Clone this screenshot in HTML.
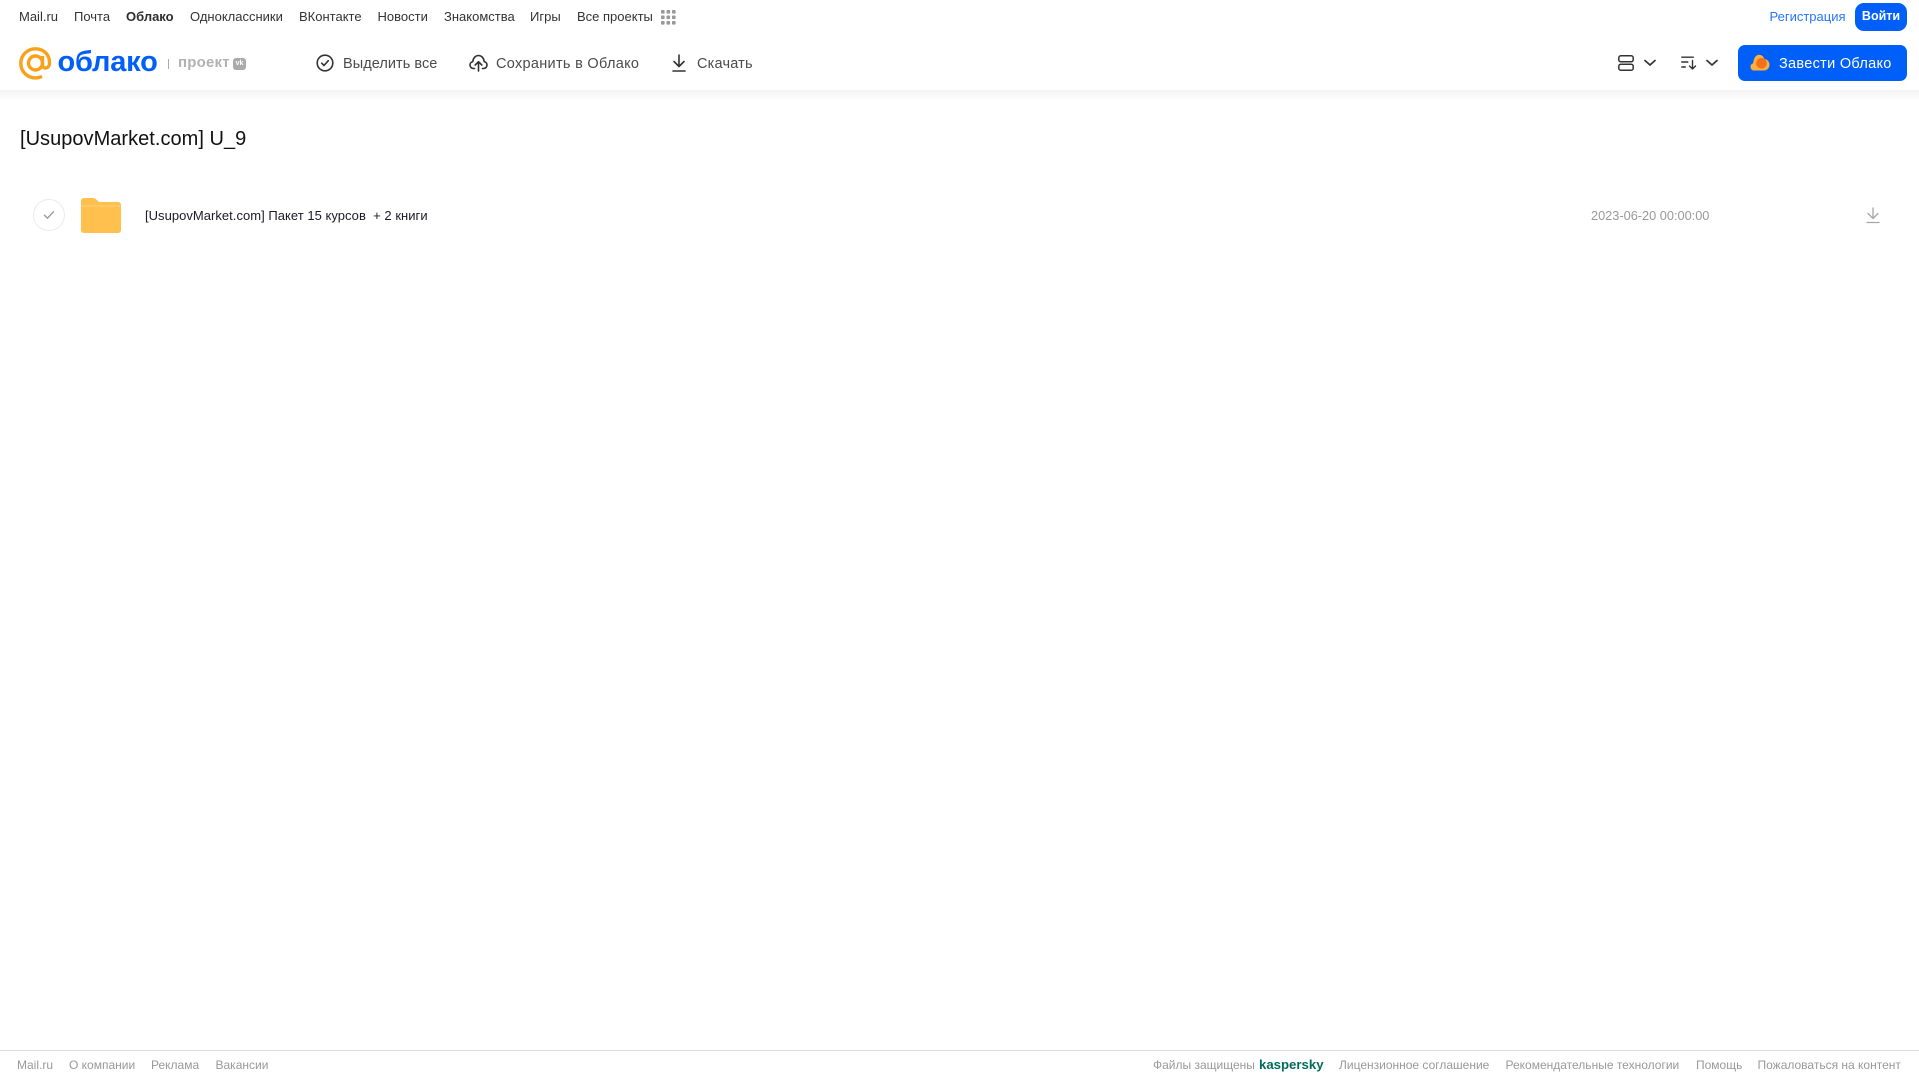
<!DOCTYPE html>
<html lang="ru"><head><meta charset="utf-8"><title>Облако</title>
<style>
html,body{margin:0;padding:0;background:#fff}
#p{position:relative;width:1919px;height:1079px;overflow:hidden;background:#fff;font-family:"Liberation Sans",sans-serif;color:#2c2d2e}
.t{position:absolute;white-space:nowrap;line-height:20px}
.n{top:6.5px;font-size:13px;color:#333}
.a{top:54px;font-size:14.5px;color:#4a4b4d}
.f{top:1055px;font-size:12px;color:#999}
svg{position:absolute;display:block}
</style></head><body><div id="p">
<div style="position:absolute;left:0;top:90px;width:1919px;height:12px;background:linear-gradient(#f3f3f3,#fff)"></div>

<span class="t n" style="left:19px">Mail.ru</span>
<span class="t n" style="left:74px">Почта</span>
<span class="t n" style="left:126px;font-weight:bold;color:#2c2d2e">Облако</span>
<span class="t n" style="left:190px">Одноклассники</span>
<span class="t n" style="left:299px">ВКонтакте</span>
<span class="t n" style="left:377.5px">Новости</span>
<span class="t n" style="left:444px">Знакомства</span>
<span class="t n" style="left:530px">Игры</span>
<span class="t n" style="left:577px">Все проекты</span>
<svg style="left:661px;top:10px" width="15" height="15" fill="#999"><rect x="0" y="0" width="3.6" height="3.6" rx=".8"/><rect x="5.5" y="0" width="3.6" height="3.6" rx=".8"/><rect x="11" y="0" width="3.6" height="3.6" rx=".8"/><rect x="0" y="5.5" width="3.6" height="3.6" rx=".8"/><rect x="5.5" y="5.5" width="3.6" height="3.6" rx=".8"/><rect x="11" y="5.5" width="3.6" height="3.6" rx=".8"/><rect x="0" y="11" width="3.6" height="3.6" rx=".8"/><rect x="5.5" y="11" width="3.6" height="3.6" rx=".8"/><rect x="11" y="11" width="3.6" height="3.6" rx=".8"/></svg>

<svg style="left:19px;top:47px" width="33" height="33" viewBox="0 0 33 33" fill="none" stroke="#f9a11b" stroke-width="3.4"><circle cx="16.500" cy="16" r="7"/><path d="M23.500 9v9.500c0 3.600 6.700 3.600 7-2C31 7.500 24.500 1.800 16.500 1.800 8.500 1.800 1.800 8 1.800 16.200c0 8.500 6.700 14.700 14.700 14.700 2.500 0 4.500-.5 6.500-1.500"/></svg>
<span class="t" style="left:57.500px;top:45.500px;font-size:29px;line-height:32px;font-weight:bold;color:#005ff9;letter-spacing:-.2px">облако</span>
<div style="position:absolute;left:168px;top:59px;width:1px;height:10px;background:#aaa"></div>
<span class="t" style="left:178px;top:53px;font-size:15px;font-weight:bold;color:#b2b2b2;letter-spacing:.2px">проект</span>
<div style="position:absolute;left:233px;top:58px;width:13px;height:12px;border-radius:3px;background:#aaa;color:#fff;font:bold 7px/12px 'Liberation Sans',sans-serif;text-align:center">vk</div>

<svg style="left:316px;top:54px" width="18" height="18" viewBox="0 0 18 18" fill="none" stroke="#333" stroke-width="1.6"><circle cx="9" cy="9" r="7.8"/><path d="M5.700 9.200l2.300 2.300 4.300-4.800" stroke-linecap="round" stroke-linejoin="round"/></svg>
<span class="t a" style="left:343px;letter-spacing:.05px">Выделить все</span>

<svg style="left:469px;top:54px" width="19" height="18" viewBox="0 0 19 18" fill="none" stroke="#333" stroke-width="1.600" stroke-linecap="round" stroke-linejoin="round"><path d="M5.500 14.500H4.500C2.500 14.500 1 13 1 11c0-1.700 1.200-3.100 2.800-3.400C4.200 4 6.500 1.500 9.500 1.500s5.300 2.500 5.700 6.100c1.600.3 2.800 1.700 2.800 3.400 0 2-1.500 3.500-3.500 3.500h-1"/><path d="M9.500 17V8M6.200 11l3.300-3.300 3.300 3.300"/></svg>
<span class="t a" style="left:496px;letter-spacing:.3px">Сохранить в Облако</span>

<svg style="left:672px;top:54px" width="14" height="18" viewBox="0 0 14 18" fill="none" stroke="#333" stroke-width="1.600" stroke-linecap="round" stroke-linejoin="round"><path d="M7 1v11M2 7.500L7 12.500l5-5M1 17h12"/></svg>
<span class="t a" style="left:697px;letter-spacing:.2px">Скачать</span>

<svg style="left:1618px;top:55px" width="16" height="16" viewBox="0 0 16 16" fill="none" stroke="#333" stroke-width="1.500"><rect x=".8" y=".8" width="14.400" height="6" rx="2"/><rect x=".8" y="9.200" width="14.400" height="6" rx="2"/></svg>
<svg style="left:1644px;top:59px" width="12" height="8" viewBox="0 0 12 8" fill="none" stroke="#333" stroke-width="1.700" stroke-linecap="round" stroke-linejoin="round"><path d="M1 1.500l5 4.500 5-4.500"/></svg>
<svg style="left:1681px;top:56px" width="16" height="14" viewBox="0 0 16 14" fill="none" stroke="#333" stroke-width="1.400" stroke-linecap="round" stroke-linejoin="round"><path d="M.8 1.200h11.500M.8 6h6M.8 11h3.500M11.500 4.500v8.500M8.500 10l3 3 3-3"/></svg>
<svg style="left:1706px;top:59px" width="12" height="8" viewBox="0 0 12 8" fill="none" stroke="#333" stroke-width="1.700" stroke-linecap="round" stroke-linejoin="round"><path d="M1 1.500l5 4.500 5-4.500"/></svg>

<span class="t n" style="left:1769.500px;color:#005ff9;opacity:.85">Регистрация</span>
<div style="position:absolute;left:1855px;top:3px;width:52px;height:28px;border-radius:9px;background:#005ff9;color:#fff;font-size:12.500px;font-weight:bold;line-height:27px;text-align:center">Войти</div>
<div style="position:absolute;left:1738px;top:45px;width:169px;height:36px;border-radius:7px;background:#005ff9"></div>
<svg style="left:1750px;top:54px" width="20" height="17" viewBox="0 0 20 17"><path d="M4 16.500C1.800 16.500 .5 14.800 .5 12.800c0-1.800 1.100-3.200 2.700-3.600C3.500 5 5.500 .8 9 .8c2.800 0 4.700 2 5.300 4.200 3 .2 5.200 2.800 5.200 5.800 0 3.200-2.400 5.700-5.500 5.700z" fill="#ffb03a"/><circle cx="11.500" cy="9.300" r="5.300" fill="#f2701d"/></svg>
<span class="t" style="left:1779px;top:54px;font-size:14.500px;color:#fff;letter-spacing:.3px">Завести Облако</span>

<span class="t" style="left:20px;top:126.500px;font-size:20px;line-height:24px;color:#111;letter-spacing:.03px">[UsupovMarket.com] U_9</span>

<div style="position:absolute;left:33px;top:199px;width:30px;height:30px;border:1px solid #ececec;border-radius:50%"></div>
<svg style="left:43px;top:210px" width="12" height="10" viewBox="0 0 12 10" fill="none" stroke="#999" stroke-width="1.400" stroke-linecap="round" stroke-linejoin="round"><path d="M1.500 5.200l3 3 6-6.500"/></svg>
<svg style="left:81px;top:198px" width="40" height="35" viewBox="0 0 40 35"><path d="M0 3C0 1.300 1.300 0 3 0h9c1.500 0 2.500.6 3.500 1.700L18 4h19c1.700 0 3 1.300 3 3v25c0 1.700-1.300 3-3 3H3c-1.700 0-3-1.300-3-3z" fill="#ffc04d"/><rect x="0" y="7.500" width="40" height="1" fill="#ffd27f"/></svg>
<span class="t" style="left:145px;top:205.500px;font-size:13px;letter-spacing:.03px;color:#1a1a2a;white-space:pre">[UsupovMarket.com] Пакет 15 курсов  + 2 книги</span>
<span class="t" style="left:1591px;top:205.500px;font-size:12.750px;color:#999">2023-06-20 00:00:00</span>
<svg style="left:1866px;top:207px" width="14" height="17" viewBox="0 0 14 17" fill="none" stroke="#a5a5a5" stroke-width="1.300" stroke-linecap="round" stroke-linejoin="round"><path d="M7 1v10M2 6.500L7 11.500l5-5M1 15.500h12"/></svg>

<div style="position:absolute;left:0;top:1050px;width:1919px;height:1px;background:#dcdcdc"></div>
<span class="t f" style="left:17px">Mail.ru</span>
<span class="t f" style="left:69px">О компании</span>
<span class="t f" style="left:151px">Реклама</span>
<span class="t f" style="left:215.500px">Вакансии</span>
<span class="t f" style="left:1153px">Файлы защищены</span>
<span class="t f" style="left:1259px;font-size:13.200px;font-weight:bold;color:#006d5c">kaspersky</span>
<span class="t f" style="left:1339px">Лицензионное соглашение</span>
<span class="t f" style="left:1505.500px">Рекомендательные технологии</span>
<span class="t f" style="left:1696px">Помощь</span>
<span class="t f" style="left:1757.500px">Пожаловаться на контент</span>
</div></body></html>
